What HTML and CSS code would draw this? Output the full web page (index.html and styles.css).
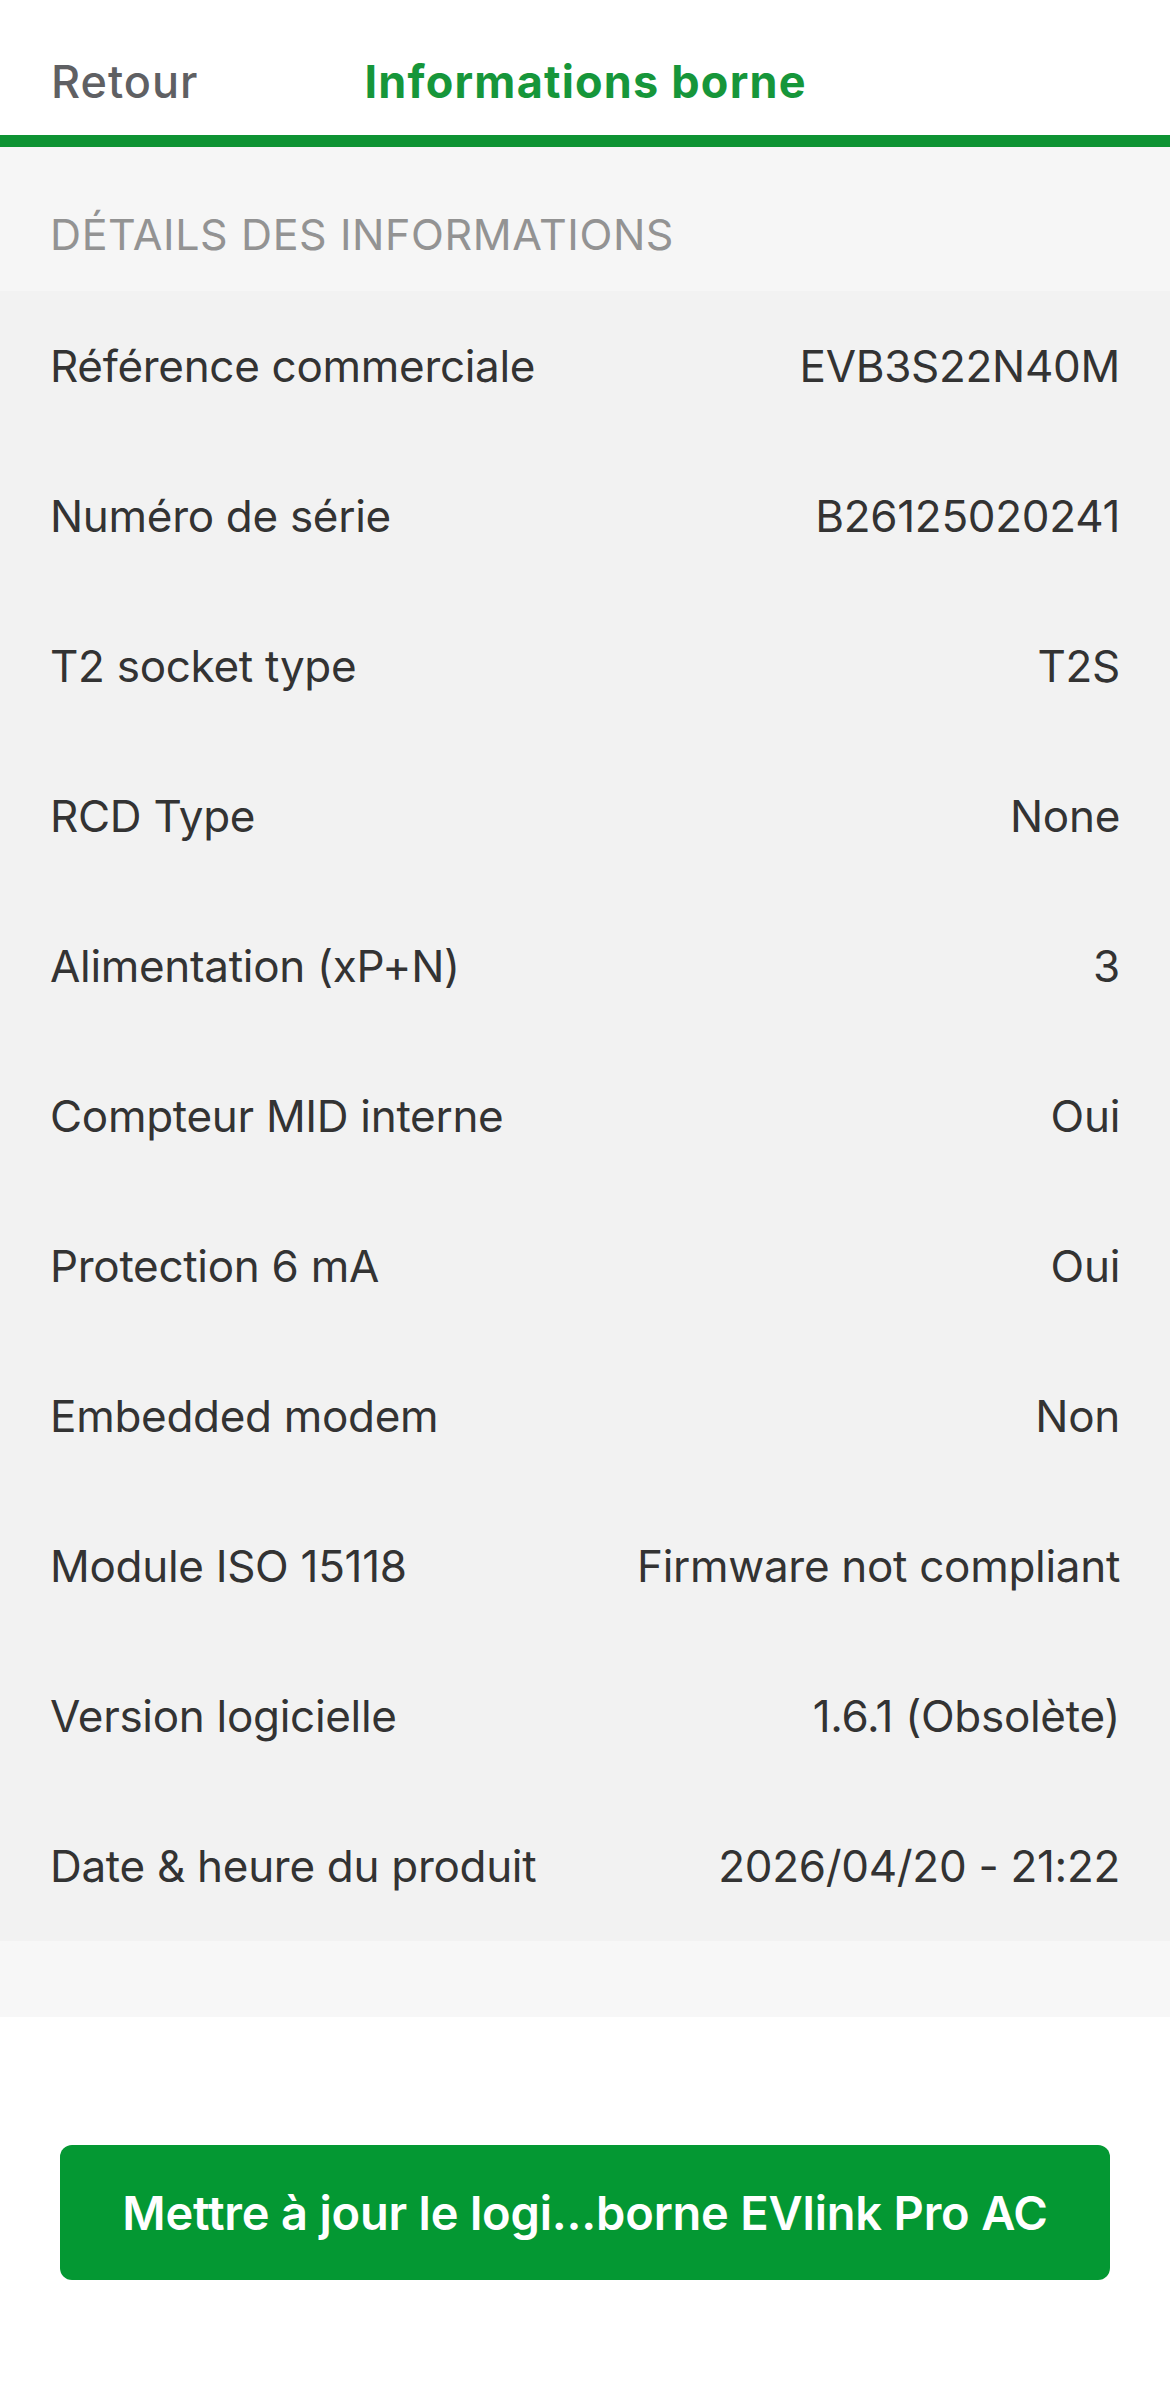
FILE: index.html
```html
<!DOCTYPE html>
<html lang="fr">
<head>
<meta charset="utf-8">
<title>Informations borne</title>
<link rel="stylesheet" href="styles.css">
</head>
<body>
<div class="page">
  <header class="topbar">
    <span class="back">Retour</span>
    <span class="title">Informations borne</span>
  </header>
  <div class="accent"></div>
  <div class="section-head">DÉTAILS DES INFORMATIONS</div>
  <div class="table">
    <div class="row"><span class="label">Référence commerciale</span><span class="value">EVB3S22N40M</span></div>
    <div class="row"><span class="label">Numéro de série</span><span class="value">B26125020241</span></div>
    <div class="row"><span class="label">T2 socket type</span><span class="value">T2S</span></div>
    <div class="row"><span class="label">RCD Type</span><span class="value">None</span></div>
    <div class="row"><span class="label">Alimentation (xP+N)</span><span class="value">3</span></div>
    <div class="row"><span class="label">Compteur MID interne</span><span class="value">Oui</span></div>
    <div class="row"><span class="label">Protection 6 mA</span><span class="value">Oui</span></div>
    <div class="row"><span class="label">Embedded modem</span><span class="value">Non</span></div>
    <div class="row"><span class="label">Module ISO 15118</span><span class="value">Firmware not compliant</span></div>
    <div class="row"><span class="label">Version logicielle</span><span class="value">1.6.1 (Obsolète)</span></div>
    <div class="row"><span class="label">Date &amp; heure du produit</span><span class="value">2026/04/20 - 21:22</span></div>
  </div>
  <div class="table-foot"></div>
  <div class="actions">
    <button class="update-btn">Mettre à jour le logi...borne EVlink Pro AC</button>
  </div>
</div>
</body>
</html>
```
FILE: styles.css
```css
* { box-sizing: border-box; }
html, body {
  margin: 0;
  padding: 0;
  background: #ffffff;
}
body {
  font-family: Inter, "Noto Sans", "Liberation Sans", sans-serif;
  color: #333333;
}
.page {
  width: 1170px;
  min-height: 2406px;
  background: #ffffff;
}
.topbar {
  height: 135px;
  display: flex;
  align-items: flex-start;
  padding: 55px 0 0 51px;
  background: #ffffff;
}
.back {
  font-size: 45px;
  line-height: 54px;
  font-weight: 500;
  color: #5f6063;
  letter-spacing: 1px;
}
.title {
  margin-left: 166px;
  font-size: 45px;
  line-height: 54px;
  font-weight: 700;
  color: #16963a;
  letter-spacing: 1.2px;
}
.accent {
  height: 12px;
  background: #0e9333;
}
.section-head {
  height: 144px;
  padding: 62px 0 0 50px;
  background: #f6f6f6;
  font-size: 43px;
  line-height: 50px;
  color: #939393;
  letter-spacing: 0.6px;
}
.table {
  background: #f2f2f2;
  display: flex;
  flex-direction: column;
}
.row {
  height: 150px;
  display: flex;
  align-items: center;
  justify-content: space-between;
  padding: 0 50px 0 50px;
  font-size: 44px;
  line-height: 53px;
}
.label, .value {
  color: #333333;
  letter-spacing: -0.3px;
}
.table-foot {
  height: 76px;
  background: #f7f7f7;
}
.actions {
  padding: 128px 60px 0 60px;
}
.update-btn {
  display: block;
  width: 100%;
  height: 135px;
  border: none;
  border-radius: 12px;
  background: #049833;
  color: #ffffff;
  font-family: Inter, "Noto Sans", "Liberation Sans", sans-serif;
  font-size: 47px;
  font-weight: 600;
  letter-spacing: -0.2px;
  padding: 0;
}
```
